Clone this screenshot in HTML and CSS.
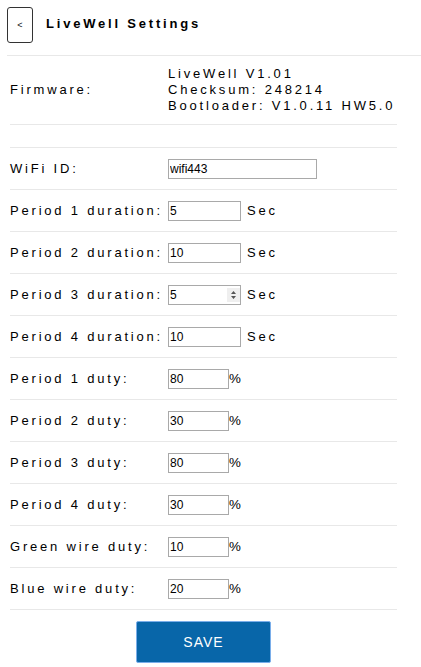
FILE: index.html
```html
<!DOCTYPE html>
<html>
<head>
<meta charset="utf-8">
<link rel="stylesheet" href="styles.css">
</head>
<body>
<header class="topbar">
  <button class="back">&lt;</button>
  <h1 class="title">LiveWell Settings</h1>
</header>
<form class="settings">
  <div class="row fw">
    <div class="label">Firmware:</div>
    <div class="fwinfo">
      <div>LiveWell V1.01</div>
      <div>Checksum: 248214</div>
      <div>Bootloader: V1.0.11 HW5.0</div>
    </div>
  </div>
  <div class="row spacer"></div>
  <div class="row">
    <div class="label">WiFi ID:</div>
    <div class="field"><input class="inp wide" type="text" value="wifi443"></div>
  </div>
  <div class="row">
    <div class="label">Period 1 duration:</div>
    <div class="field"><input class="inp dur" type="text" value="5"><span class="unit">Sec</span></div>
  </div>
  <div class="row">
    <div class="label">Period 2 duration:</div>
    <div class="field"><input class="inp dur" type="text" value="10"><span class="unit">Sec</span></div>
  </div>
  <div class="row">
    <div class="label">Period 3 duration:</div>
    <div class="field"><span class="spinwrap"><input class="inp dur" type="text" value="5"><span class="spin"><svg width="7" height="10" viewBox="0 0 7 10"><path d="M3.5 1 L6 4 H1 Z M3.5 9 L6 6 H1 Z" fill="#555"/></svg></span></span><span class="unit">Sec</span></div>
  </div>
  <div class="row">
    <div class="label">Period 4 duration:</div>
    <div class="field"><input class="inp dur" type="text" value="10"><span class="unit">Sec</span></div>
  </div>
  <div class="row">
    <div class="label">Period 1 duty:</div>
    <div class="field"><input class="inp duty" type="text" value="80"><span class="pct">%</span></div>
  </div>
  <div class="row">
    <div class="label">Period 2 duty:</div>
    <div class="field"><input class="inp duty" type="text" value="30"><span class="pct">%</span></div>
  </div>
  <div class="row">
    <div class="label">Period 3 duty:</div>
    <div class="field"><input class="inp duty" type="text" value="80"><span class="pct">%</span></div>
  </div>
  <div class="row">
    <div class="label">Period 4 duty:</div>
    <div class="field"><input class="inp duty" type="text" value="30"><span class="pct">%</span></div>
  </div>
  <div class="row">
    <div class="label">Green wire duty:</div>
    <div class="field"><input class="inp duty" type="text" value="10"><span class="pct">%</span></div>
  </div>
  <div class="row">
    <div class="label">Blue wire duty:</div>
    <div class="field"><input class="inp duty" type="text" value="20"><span class="pct">%</span></div>
  </div>
  <div class="actions">
    <button class="save" type="button">SAVE</button>
  </div>
</form>
</body>
</html>
```
FILE: styles.css
```css
html, body {
  margin: 0;
  padding: 0;
  background: #fff;
}
body {
  font-family: "Liberation Sans", Arial, sans-serif;
  color: #000;
}
.topbar {
  display: flex;
  align-items: flex-start;
  margin-left: 7px;
  padding-top: 7px;
  height: 48px;
  border-bottom: 1px solid #e8e8e8;
}
.back {
  box-sizing: border-box;
  width: 26px;
  height: 36px;
  border: 1px solid #333;
  border-radius: 3px;
  background: #fff;
  font-family: "Liberation Sans", Arial, sans-serif;
  font-size: 9px;
  color: #111;
  padding: 0;
  margin: 0;
}
.title {
  margin: 9px 0 0 13px;
  font-size: 13px;
  font-weight: bold;
  letter-spacing: 2.8px;
  line-height: 16px;
}
.settings {
  margin: 0 24px 0 10px;
}
.row {
  display: grid;
  grid-template-columns: 158px auto;
  align-items: center;
  height: 41px;
  border-bottom: 1px solid #e8e8e8;
  font-size: 13px;
  letter-spacing: 2.8px;
}
.row.fw {
  height: 68px;
  line-height: 16px;
}
.row.spacer {
  height: 22px;
}
.field {
  display: flex;
  align-items: center;
}
.inp {
  box-sizing: border-box;
  height: 20px;
  border: 1px solid #a9a9a9;
  padding: 0 1px;
  margin: 0;
  font-family: "Liberation Sans", Arial, sans-serif;
  font-size: 12px;
  letter-spacing: 0;
  color: #000;
  background: #fff;
  outline: none;
}
.wide { width: 149px; }
.dur { width: 73px; }
.duty { width: 61px; }
.unit {
  margin-left: 6px;
}
.pct {
  letter-spacing: 0;
  font-size: 13.33px;
}
.spinwrap {
  position: relative;
  display: inline-flex;
}
.spin {
  position: absolute;
  right: 1px;
  top: 3px;
  width: 13px;
  height: 14px;
  background: #efefef;
  display: flex;
  align-items: center;
  justify-content: center;
}
.actions {
  display: flex;
  justify-content: center;
  padding-top: 11px;
}
.save {
  box-sizing: border-box;
  width: 135px;
  height: 42px;
  background: #0866a9;
  border: 1px solid #7aaeea;
  border-radius: 2px;
  color: #fff;
  font-family: "Liberation Sans", Arial, sans-serif;
  font-size: 14px;
  letter-spacing: 1px;
}
```
